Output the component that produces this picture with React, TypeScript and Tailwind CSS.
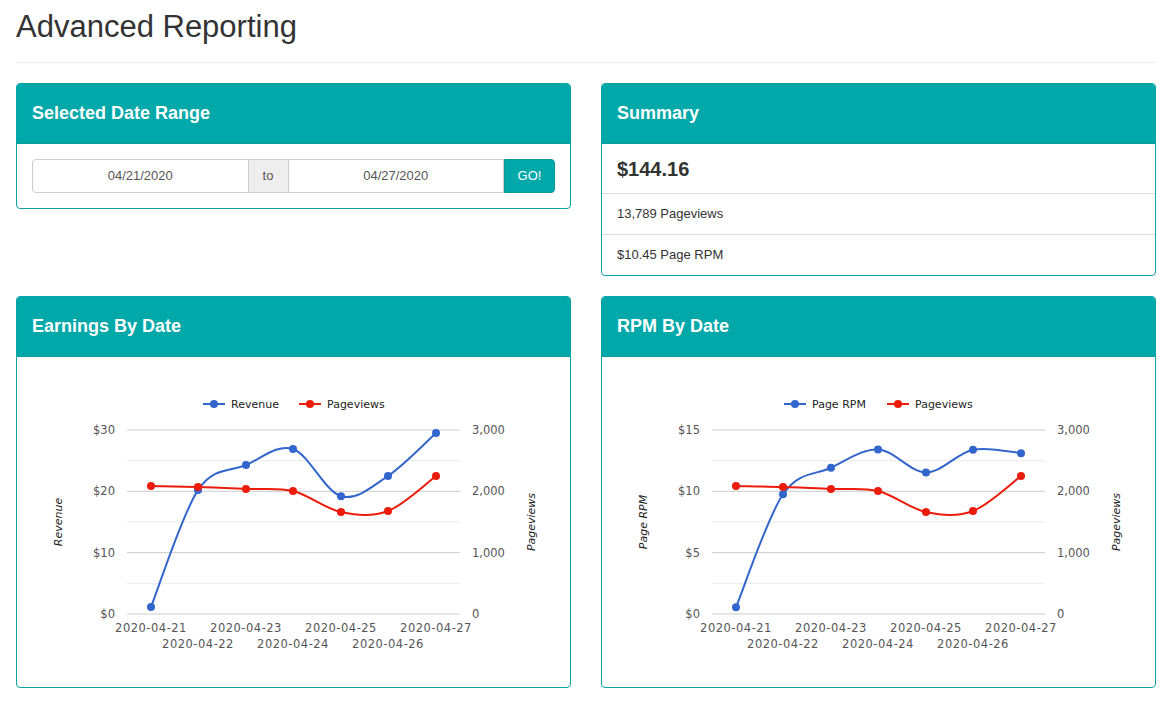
import React from "react";

type Pt = [number, number];

const xs = [134, 181, 229, 276, 324, 371, 419];

// y = 257 - v / max * 184
const toY = (v: number, max: number) => 257 - (v / max) * 184;

const revenue = [1.14, 20.2, 24.3, 26.9, 19.2, 22.5, 29.5];
const pageviews = [2087, 2070, 2038, 2005, 1663, 1680, 2250];
const rpm = revenue.map((r, i) => (r / pageviews[i]) * 1000);

const dates = ["2020-04-21", "2020-04-22", "2020-04-23", "2020-04-24", "2020-04-25", "2020-04-26", "2020-04-27"];

function smooth(pts: Pt[]) {
  let d = `M${pts[0][0]},${pts[0][1]}`;
  const t = 1 / 6;
  for (let i = 0; i < pts.length - 1; i++) {
    const p0 = pts[i - 1] || pts[i];
    const p1 = pts[i];
    const p2 = pts[i + 1];
    const p3 = pts[i + 2] || p2;
    const c1x = p1[0] + (p2[0] - p0[0]) * t;
    const c1y = p1[1] + (p2[1] - p0[1]) * t;
    const c2x = p2[0] - (p3[0] - p1[0]) * t;
    const c2y = p2[1] - (p3[1] - p1[1]) * t;
    d += ` C${c1x.toFixed(1)},${c1y.toFixed(1)} ${c2x.toFixed(1)},${c2y.toFixed(1)} ${p2[0]},${p2[1]}`;
  }
  return d;
}

const BLUE = "#3366cc";
const RED = "#ec1c0c";

function LineChart({
  name,
  values,
  max,
  ticks,
  legendX,
}: {
  name: string;
  values: number[];
  max: number;
  ticks: string[];
  legendX: [number, number];
}) {
  const blue: Pt[] = values.map((v, i) => [xs[i], toY(v, max)]);
  const red: Pt[] = pageviews.map((v, i) => [xs[i], toY(v, 3000)]);
  const grid = [73, 103.7, 134.3, 165, 195.7, 226.3, 257];
  const right = ["3,000", "2,000", "1,000", "0"];
  const font = { fontFamily: "'DejaVu Sans', sans-serif" };

  return (
    <svg width="553" height="330" viewBox="0 0 553 330" className="block" style={font}>
      {/* legend */}
      {[
        { x: legendX[0], c: BLUE, t: name },
        { x: legendX[1], c: RED, t: "Pageviews" },
      ].map((l) => (
        <g key={l.t}>
          <line x1={l.x} y1={47} x2={l.x + 22} y2={47} stroke={l.c} strokeWidth={2} />
          <circle cx={l.x + 11} cy={47} r={4} fill={l.c} />
          <text x={l.x + 28} y={51} fontSize={11} fill="#222">{l.t}</text>
        </g>
      ))}

      {/* grid */}
      {grid.map((y, i) => (
        <line key={y} x1={110} x2={443} y1={y} y2={y} stroke={i % 2 === 0 ? "#cccccc" : "#ebebeb"} strokeWidth={1} />
      ))}

      {/* left ticks */}
      {ticks.map((t, i) => (
        <text key={t} x={98} y={grid[i * 2] + 4} fontSize={11.5} fill="#555" textAnchor="end">{t}</text>
      ))}
      {right.map((t, i) => (
        <text key={t} x={455} y={grid[i * 2] + 4} fontSize={11.5} fill="#555">{t}</text>
      ))}

      {/* axis titles */}
      <text x={0} y={0} fontSize={11} fontStyle="italic" fill="#222" textAnchor="middle" transform="translate(45,165) rotate(-90)">{name}</text>
      <text x={0} y={0} fontSize={11} fontStyle="italic" fill="#222" textAnchor="middle" transform="translate(518,165) rotate(-90)">Pageviews</text>

      {/* x labels */}
      {dates.map((d, i) => (
        <text key={d} x={xs[i]} y={i % 2 === 0 ? 275 : 291} fontSize={11.5} fill="#555" textAnchor="middle" letterSpacing={0.5}>{d}</text>
      ))}

      {/* series */}
      <path d={smooth(blue)} fill="none" stroke={BLUE} strokeWidth={2} />
      <path d={smooth(red)} fill="none" stroke={RED} strokeWidth={2} />
      {blue.map((p, i) => (
        <circle key={"b" + i} cx={p[0]} cy={p[1]} r={4} fill={BLUE} />
      ))}
      {red.map((p, i) => (
        <circle key={"r" + i} cx={p[0]} cy={p[1]} r={4} fill={RED} />
      ))}
    </svg>
  );
}

function Card({ title, children }: { title: string; children: React.ReactNode }) {
  return (
    <div className="rounded-[4px] border border-[#0ba4a4] bg-white overflow-hidden">
      <div className="h-[60px] border-b border-[#0a9a9a] bg-[#00a8a9] px-[15px] flex items-center text-white text-[18px] font-bold">
        {title}
      </div>
      {children}
    </div>
  );
}

export default function App() {
  return (
    <div className="min-h-screen bg-white pl-4 pr-[14px] pb-4 text-[#333]" style={{ fontFamily: "'Liberation Sans', Arial, sans-serif" }}>
      <h1 className="pt-[10px] text-[31px] leading-[34px] text-[#333]">Advanced Reporting</h1>
      <hr className="mt-[18px] border-t border-[#eeeeee]" />

      <div className="mt-5 grid grid-cols-2 gap-x-[30px] gap-y-5 items-start">
        <Card title="Selected Date Range">
          <div className="px-[15px] py-[15px]">
            <div className="flex h-[34px] text-[13px] text-[#555]">
              <div className="flex-1 flex items-center justify-center border border-[#ccc] rounded-l-[4px]">04/21/2020</div>
              <div className="w-[39px] flex items-center justify-center border-y border-[#ccc] bg-[#eeeeee]">to</div>
              <div className="flex-1 flex items-center justify-center border border-[#ccc]">04/27/2020</div>
              <div className="w-[51px] flex items-center justify-center bg-[#00a8a9] border border-[#0a9a9a] text-white rounded-r-[4px]">GO!</div>
            </div>
          </div>
        </Card>

        <Card title="Summary">
          <div className="h-[49px] px-[15px] flex items-center text-[20px] font-bold">$144.16</div>
          <div className="h-[41px] px-[15px] flex items-center border-t border-[#dddddd] text-[13px]">13,789 Pageviews</div>
          <div className="h-[41px] px-[15px] flex items-center border-t border-[#dddddd] text-[13px]">$10.45 Page RPM</div>
        </Card>

        <Card title="Earnings By Date">
          <LineChart name="Revenue" values={revenue} max={30} ticks={["$30", "$20", "$10", "$0"]} legendX={[186, 282]} />
        </Card>

        <Card title="RPM By Date">
          <LineChart name="Page RPM" values={rpm} max={15} ticks={["$15", "$10", "$5", "$0"]} legendX={[182, 285]} />
        </Card>
      </div>
    </div>
  );
}
